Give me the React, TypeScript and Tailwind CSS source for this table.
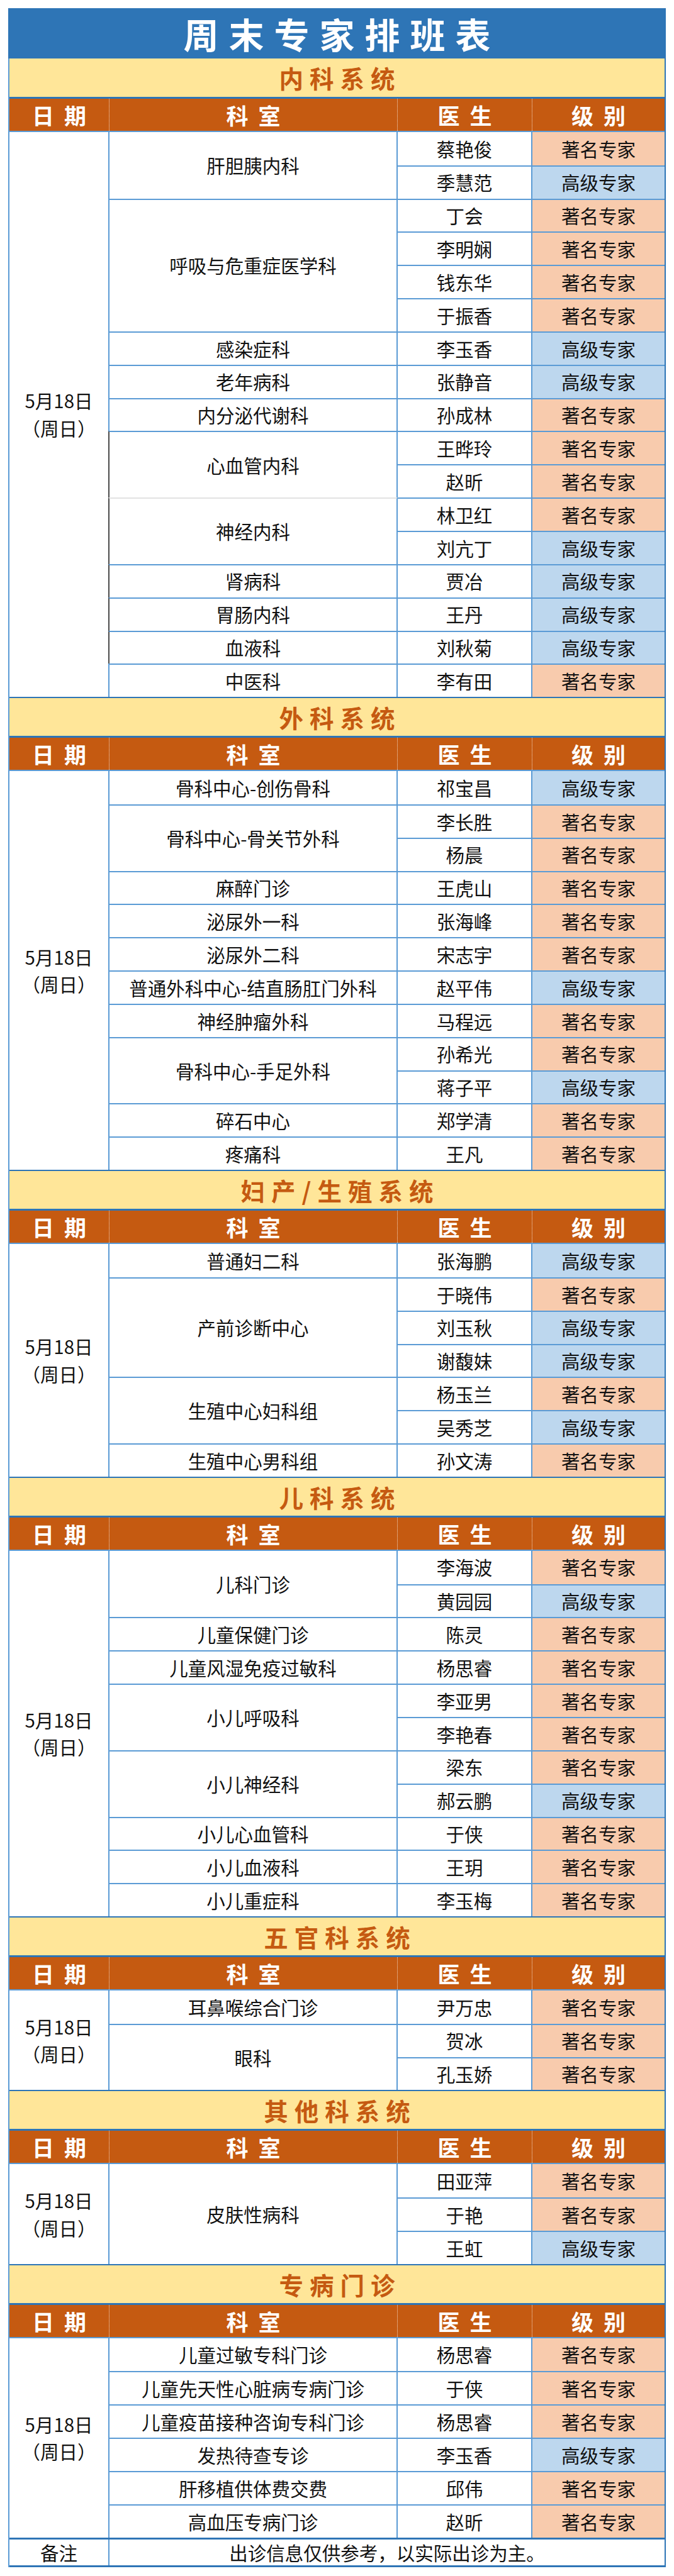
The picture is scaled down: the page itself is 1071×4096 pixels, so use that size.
import React from 'react';

type Level = 'A' | 'B';
type Doc = [string, Level];
interface Group {
  dept: string;
  docs: Doc[];
  dark?: boolean;
  lightTop?: boolean;
}
interface Section {
  title: string;
  groups: Group[];
}

const sections: Section[] = [
  {
    title: '内科系统',
    groups: [
      { dept: '肝胆胰内科', docs: [['蔡艳俊', 'A'], ['季慧范', 'B']] },
      { dept: '呼吸与危重症医学科', docs: [['丁会', 'A'], ['李明娴', 'A'], ['钱东华', 'A'], ['于振香', 'A']] },
      { dept: '感染症科', docs: [['李玉香', 'B']] },
      { dept: '老年病科', docs: [['张静音', 'B']] },
      { dept: '内分泌代谢科', docs: [['孙成林', 'A']] },
      { dept: '心血管内科', docs: [['王晔玲', 'A'], ['赵昕', 'A']], dark: true },
      { dept: '神经内科', docs: [['林卫红', 'A'], ['刘亢丁', 'B']], dark: true, lightTop: true },
      { dept: '肾病科', docs: [['贾冶', 'B']], dark: true },
      { dept: '胃肠内科', docs: [['王丹', 'B']], dark: true },
      { dept: '血液科', docs: [['刘秋菊', 'B']], dark: true },
      { dept: '中医科', docs: [['李有田', 'A']] },
    ],
  },
  {
    title: '外科系统',
    groups: [
      { dept: '骨科中心-创伤骨科', docs: [['祁宝昌', 'B']] },
      { dept: '骨科中心-骨关节外科', docs: [['李长胜', 'A'], ['杨晨', 'A']] },
      { dept: '麻醉门诊', docs: [['王虎山', 'A']] },
      { dept: '泌尿外一科', docs: [['张海峰', 'A']] },
      { dept: '泌尿外二科', docs: [['宋志宇', 'A']] },
      { dept: '普通外科中心-结直肠肛门外科', docs: [['赵平伟', 'B']] },
      { dept: '神经肿瘤外科', docs: [['马程远', 'A']] },
      { dept: '骨科中心-手足外科', docs: [['孙希光', 'A'], ['蒋子平', 'B']] },
      { dept: '碎石中心', docs: [['郑学清', 'A']] },
      { dept: '疼痛科', docs: [['王凡', 'A']] },
    ],
  },
  {
    title: '妇产/生殖系统',
    groups: [
      { dept: '普通妇二科', docs: [['张海鹏', 'B']] },
      { dept: '产前诊断中心', docs: [['于晓伟', 'A'], ['刘玉秋', 'B'], ['谢馥妹', 'B']] },
      { dept: '生殖中心妇科组', docs: [['杨玉兰', 'A'], ['吴秀芝', 'B']] },
      { dept: '生殖中心男科组', docs: [['孙文涛', 'A']] },
    ],
  },
  {
    title: '儿科系统',
    groups: [
      { dept: '儿科门诊', docs: [['李海波', 'A'], ['黄园园', 'B']] },
      { dept: '儿童保健门诊', docs: [['陈灵', 'A']] },
      { dept: '儿童风湿免疫过敏科', docs: [['杨思睿', 'A']] },
      { dept: '小儿呼吸科', docs: [['李亚男', 'A'], ['李艳春', 'A']] },
      { dept: '小儿神经科', docs: [['梁东', 'A'], ['郝云鹏', 'B']] },
      { dept: '小儿心血管科', docs: [['于侠', 'A']] },
      { dept: '小儿血液科', docs: [['王玥', 'A']] },
      { dept: '小儿重症科', docs: [['李玉梅', 'A']] },
    ],
  },
  {
    title: '五官科系统',
    groups: [
      { dept: '耳鼻喉综合门诊', docs: [['尹万忠', 'A']] },
      { dept: '眼科', docs: [['贺冰', 'A'], ['孔玉娇', 'A']] },
    ],
  },
  {
    title: '其他科系统',
    groups: [{ dept: '皮肤性病科', docs: [['田亚萍', 'A'], ['于艳', 'A'], ['王虹', 'B']] }],
  },
  {
    title: '专病门诊',
    groups: [
      { dept: '儿童过敏专科门诊', docs: [['杨思睿', 'A']] },
      { dept: '儿童先天性心脏病专病门诊', docs: [['于侠', 'A']] },
      { dept: '儿童疫苗接种咨询专科门诊', docs: [['杨思睿', 'A']] },
      { dept: '发热待查专诊', docs: [['李玉香', 'B']] },
      { dept: '肝移植供体费交费', docs: [['邱伟', 'A']] },
      { dept: '高血压专病门诊', docs: [['赵昕', 'A']] },
    ],
  },
];

const Spaced = ({ text, className }: { text: string; className: string }) => (
  <div className={`flex ${className}`}>
    {Array.from(text).map((c, i) => (
      <span key={i}>{c}</span>
    ))}
  </div>
);

const ColHeader = () => (
  <div className="flex h-[52.85px] bg-[#c55a11] border-b-2 border-[#5b9bd5] text-white text-[35px] font-bold leading-none">
    <div className="w-[159px] shrink-0 flex items-center justify-center border-r border-dotted border-r-[#f4dccb]">
      <Spaced text="日期" className="gap-[16px]" />
    </div>
    <div className="w-[458px] shrink-0 flex items-center justify-center border-r border-dotted border-r-[#f4dccb]">
      <Spaced text="科室" className="gap-[16px]" />
    </div>
    <div className="w-[214px] shrink-0 flex items-center justify-center border-r border-dotted border-r-[#f4dccb]">
      <Spaced text="医生" className="gap-[16px]" />
    </div>
    <div className="flex-1 flex items-center justify-center">
      <Spaced text="级别" className="gap-[16px]" />
    </div>
  </div>
);

const GroupRow = ({ g, first }: { g: Group; first: boolean }) => {
  let deptCls = 'w-[458px] border-r-2 border-r-[#5b9bd5]';
  if (g.dark) deptCls = '-ml-[2px] w-[460px] border-l-2 border-l-[#4a4a4a] border-r-2 border-r-[#5b9bd5]';
  let topCls = '';
  if (!first) topCls = g.lightTop ? 'border-t-2 border-t-[#e2e2e2]' : 'border-t-2 border-t-[#5b9bd5]';

  return (
    <div className="flex">
      <div className={`shrink-0 flex items-center justify-center ${deptCls} ${topCls}`}>{g.dept}</div>
      <div className="flex-1 flex flex-col">
        {g.docs.map(([name, lvl], i) => (
          <div
            key={i}
            className={`h-[52.85px] flex ${first && i === 0 ? '' : 'border-t-2 border-t-[#5b9bd5]'}`}
          >
            <div className="w-[214px] shrink-0 flex items-center justify-center border-r-2 border-r-[#5b9bd5]">
              {name}
            </div>
            <div
              className={`flex-1 flex items-center justify-center ${lvl === 'A' ? 'bg-[#f8cbad]' : 'bg-[#bdd7ee]'}`}
            >
              {lvl === 'A' ? '著名专家' : '高级专家'}
            </div>
          </div>
        ))}
      </div>
    </div>
  );
};

const SectionBlock = ({ s, first }: { s: Section; first: boolean }) => (
  <div>
    <div
      className={`flex items-center justify-center bg-[#ffe699] border-b-[3px] border-b-[#2e75b6] ${
        first ? 'h-[64px]' : 'h-[65px] border-t-2 border-t-[#2e75b6]'
      }`}
    >
      <Spaced text={s.title} className="gap-[10px] text-[38.5px] font-bold text-[#c55a11] leading-none" />
    </div>
    <ColHeader />
    <div className="flex text-[29.5px] leading-none text-[#111]">
      <div className="w-[159px] shrink-0 flex flex-col items-center justify-center border-r-2 border-r-[#5b9bd5] leading-[43.6px]">
        <span>5月18日</span>
        <span>（周日）</span>
      </div>
      <div className="flex-1 flex flex-col">
        {s.groups.map((g, gi) => (
          <GroupRow key={gi} g={g} first={gi === 0} />
        ))}
      </div>
    </div>
  </div>
);

export default function App() {
  return (
    <div className="w-[1071px] min-h-[4096px] bg-white pt-[13px] pl-[13px] font-['Noto_Sans_CJK_SC','Noto_Sans',sans-serif]">
      <div className="w-[1045px]">
        <div className="h-[80px] bg-[#2e75b6] flex items-center justify-center">
          <Spaced text="周末专家排班表" className="gap-[16px] text-[56px] font-bold text-white leading-none" />
        </div>
        <div className="border-l-2 border-l-[#5b9bd5] border-r-2 border-r-[#2e75b6]">
          {sections.map((s, i) => (
            <SectionBlock key={i} s={s} first={i === 0} />
          ))}
          <div className="h-[47.5px] flex border-t-[3px] border-t-[#2e75b6] border-b-[3px] border-b-[#2e75b6] text-[29.5px] leading-none text-[#111]">
            <div className="w-[159px] shrink-0 flex items-center justify-center border-r-2 border-r-[#5b9bd5]">
              备注
            </div>
            <div className="flex-1 flex items-center justify-center">出诊信息仅供参考，以实际出诊为主。</div>
          </div>
        </div>
      </div>
    </div>
  );
}
